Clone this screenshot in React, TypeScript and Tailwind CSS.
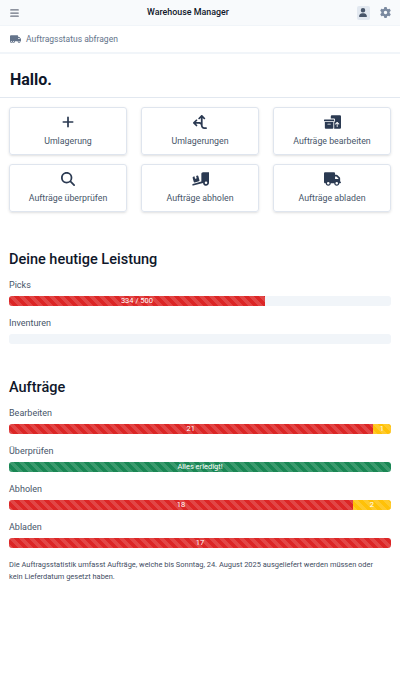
import type { ReactNode } from 'react';
import {
  FaArrowsSplitUpAndLeft,
  FaBars,
  FaBoxesPacking,
  FaGear,
  FaMagnifyingGlass,
  FaPlus,
  FaTruck,
  FaTruckMoving,
  FaTruckRampBox,
  FaUser,
} from 'react-icons/fa6';

const stripes =
  'bg-[linear-gradient(45deg,rgba(255,255,255,0.15)_25%,transparent_25%,transparent_50%,rgba(255,255,255,0.15)_50%,rgba(255,255,255,0.15)_75%,transparent_75%,transparent)] bg-[length:10px_10px]';

const actions = [
  { label: 'Umlagerung', icon: <FaPlus className="w-[12px] h-[14px]" /> },
  { label: 'Umlagerungen', icon: <FaArrowsSplitUpAndLeft className="w-[14px] h-[14px]" /> },
  { label: 'Aufträge bearbeiten', icon: <FaBoxesPacking className="w-[17px] h-[14px]" /> },
  { label: 'Aufträge überprüfen', icon: <FaMagnifyingGlass className="w-[14px] h-[14px]" /> },
  { label: 'Aufträge abholen', icon: <FaTruckRampBox className="w-[17px] h-[14px]" /> },
  { label: 'Aufträge abladen', icon: <FaTruck className="w-[17px] h-[14px]" /> },
];

function Bar({ label, children }: { label: string; children?: ReactNode }) {
  return (
    <div className="mb-[9px]">
      <div className="text-[9px] leading-[14px] pt-[1px] text-[#475569] mb-[4px]">{label}</div>
      <div className="h-[10px] rounded-[3px] bg-[#f1f5f9] flex text-[7.5px] leading-[10px] text-white text-center">
        {children}
      </div>
    </div>
  );
}

export default function App() {
  return (
    <div className="w-[400px] h-[675px] bg-white overflow-hidden text-[#0f172a] font-['Roboto',sans-serif]">
      <div className="h-[26px] bg-[#f8fafc] border-b border-[#f1f5f9] flex items-center justify-between pl-[10px] pr-[9px]">
        <FaBars className="w-[9px] h-[10px] text-[#6b7280]" />
        <div className="text-[8.9px] font-medium">Warehouse Manager</div>
        <div className="flex items-center gap-[10px]">
          <div className="w-[13px] h-[14px] bg-[#e2e8f0] rounded-[2px] flex items-center justify-center">
            <FaUser className="w-[8px] h-[9px] text-[#475569]" />
          </div>
          <FaGear className="w-[11px] h-[11px] text-[#7b8aa0]" />
        </div>
      </div>
      <div className="h-[28px] border-b-2 border-[#f1f5f9] flex items-center gap-[5px] pl-[10px] text-[8.5px] text-[#64748b]">
        <FaTruckMoving className="w-[11px] h-[10px]" />
        Auftragsstatus abfragen
      </div>
      <div className="h-[44px] border-b border-[#e2e8f0] flex items-center pl-[10px] pt-[9px] text-[16px] font-bold">
        Hallo.
      </div>
      <div className="grid grid-cols-3 gap-x-[14px] gap-y-[9px] px-[9px] mt-[9px]">
        {actions.map((a) => (
          <div
            key={a.label}
            className="h-[48px] rounded-[3px] border border-[#dfe5ee] shadow-sm flex flex-col items-center pt-[7px] gap-[5px] text-[8.8px] leading-[14px] text-[#475569]"
          >
            <span className="h-[14px] flex items-center text-[#2b3a52]">{a.icon}</span>
            {a.label}
          </div>
        ))}
      </div>
      <div className="px-[9px] mt-[38px]">
        <h2 className="text-[14.5px] leading-[20px] font-medium mb-[7px]">Deine heutige Leistung</h2>
        <Bar label="Picks">
          <div className={`w-[67%] rounded-l-[3px] bg-[#dc2626] ${stripes}`}>334 / 500</div>
        </Bar>
        <Bar label="Inventuren" />
        <h2 className="text-[14.5px] leading-[20px] font-medium mt-[34px] mb-[7px]">Aufträge</h2>
        <Bar label="Bearbeiten">
          <div className={`w-[95.2%] rounded-l-[3px] bg-[#dc2626] ${stripes}`}>21</div>
          <div className={`flex-1 rounded-r-[3px] bg-[#ffc107] ${stripes}`}>1</div>
        </Bar>
        <Bar label="Überprüfen">
          <div className={`w-full rounded-[3px] bg-[#198754] ${stripes}`}>Alles erledigt!</div>
        </Bar>
        <Bar label="Abholen">
          <div className={`w-[90%] rounded-l-[3px] bg-[#dc2626] ${stripes}`}>18</div>
          <div className={`flex-1 rounded-r-[3px] bg-[#ffc107] ${stripes}`}>2</div>
        </Bar>
        <Bar label="Abladen">
          <div className={`w-full rounded-[3px] bg-[#dc2626] ${stripes}`}>17</div>
        </Bar>
        <p className="text-[7.45px] leading-[11.5px] text-[#3f4d63] mt-[11px] pr-[10px]">
          Die Auftragsstatistik umfasst Aufträge, welche bis Sonntag, 24. August 2025 ausgeliefert werden müssen oder kein Lieferdatum gesetzt haben.
        </p>
      </div>
    </div>
  );
}
